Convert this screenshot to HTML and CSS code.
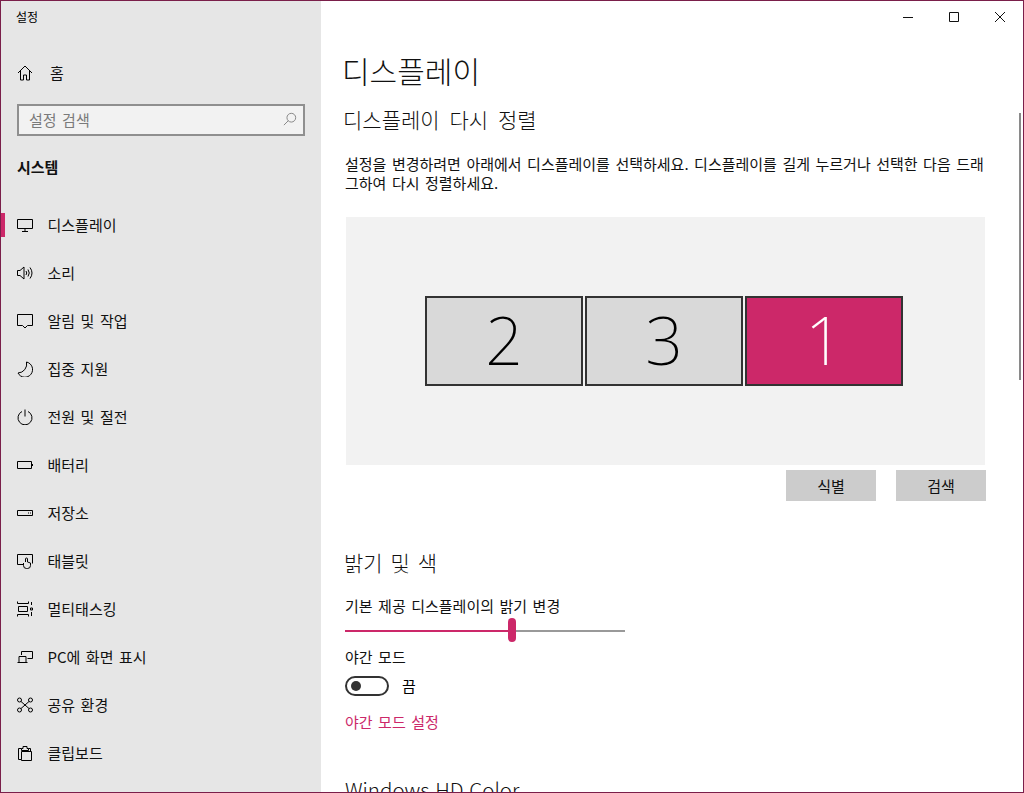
FILE: index.html
```html
<!DOCTYPE html>
<html lang="ko">
<head>
  <meta charset="UTF-8">
  <title>설정</title>
  <link rel="stylesheet" href="styles.css">
</head>
<body>
  <div class="window">

    <aside class="sidebar">
      <div class="app-title">설정</div>

      <div class="nav-row home-row">
        <svg class="icon" viewBox="0 0 16 16"><path d="M1 8 8 1l7 7M3.500 5.500V15h3v-5h3v5h3V5.500"/></svg>
        <span>홈</span>
      </div>

      <div class="search-box">
        <span class="search-text">설정 검색</span>
        <svg class="search-icon" viewBox="0 0 16 16"><circle cx="9.500" cy="6.500" r="5"/><path d="M6 10 1 15"/></svg>
      </div>

      <div class="group-title">시스템</div>

      <div class="nav-row active">
        <svg class="icon" viewBox="0 0 16 16"><path d="M.5 2.500h15v9H.5zM8 11.500v3M5 14.500h6"/></svg>
        <span>디스플레이</span>
      </div>
      <div class="nav-row">
        <svg class="icon" viewBox="0 0 16 16"><path d="M.5 5.500h2.500L7 2v12L3 10.500H.5zM9 6q1.500 2 0 4M11 4.500q2.500 3.500 0 7M13 2.500q4 5.500 0 11"/></svg>
        <span>소리</span>
      </div>
      <div class="nav-row">
        <svg class="icon" viewBox="0 0 16 16"><path d="M.5 1.500h15v11h-5L8 15l-2.500-2.500h-5z"/></svg>
        <span>알림 및 작업</span>
      </div>
      <div class="nav-row">
        <svg class="icon" viewBox="0 0 16 16"><path d="M9.500 1A7.700 7.700 0 1 1 1 12 9 9 0 0 0 9.500 1z"/></svg>
        <span>집중 지원</span>
      </div>
      <div class="nav-row">
        <svg class="icon" viewBox="0 0 16 16"><path d="M5 2.500a7 7 0 1 0 6 0M8 .5v7"/></svg>
        <span>전원 및 절전</span>
      </div>
      <div class="nav-row">
        <svg class="icon" viewBox="0 0 16 16"><path d="M.5 4.500h14v7H.5zM15.500 7v2"/></svg>
        <span>배터리</span>
      </div>
      <div class="nav-row">
        <svg class="icon" viewBox="0 0 16 16"><path d="M.5 5.500h15v5H.5zM11 8h1M13 8h1"/></svg>
        <span>저장소</span>
      </div>
      <div class="nav-row">
        <svg class="icon" viewBox="0 0 16 16"><path d="M6 11.500H.5v-10h15v9M8.500 9V6a1 1 0 0 1 2 0v3l3 1v2.500a3 3 0 0 1-3 3h-1a3 3 0 0 1-3-3V10"/></svg>
        <span>태블릿</span>
      </div>
      <div class="nav-row">
        <svg class="icon" viewBox="0 0 16 16"><path d="M.5.500v2h11v-2M.5 15.500v-2h11v2M1.500 5.500h9v5h-9zM14.500 1v3M14.500 11v4M13.500 7h2v2h-2z"/></svg>
        <span>멀티태스킹</span>
      </div>
      <div class="nav-row">
        <svg class="icon" viewBox="0 0 16 16"><path d="M4.500 6V2.500h11v7h-5M.5 13.500h10M2 13.500V7.500h7v6"/></svg>
        <span>PC에 화면 표시</span>
      </div>
      <div class="nav-row">
        <svg class="icon" viewBox="0 0 16 16"><circle cx="2.500" cy="3" r="2"/><circle cx="13.500" cy="3" r="2"/><circle cx="2.500" cy="13" r="2"/><circle cx="13.500" cy="13" r="2"/><path d="M4 4.500l8 7M12 4.500l-8 7"/></svg>
        <span>공유 환경</span>
      </div>
      <div class="nav-row">
        <svg class="icon" viewBox="0 0 16 16"><path d="M4.500 14.500h-3v-11h3M11.500 3.500h2v3M4.500 14.500v-8h10v9h-10zM4.500 3.500h1.500V1.500h4v2h1.500v2h-7z"/></svg>
        <span>클립보드</span>
      </div>
    </aside>

    <main class="content">
      <div class="title-bar">
        <svg class="win-btn" viewBox="0 0 10 10"><path d="M0 5.500h10"/></svg>
        <svg class="win-btn" viewBox="0 0 10 10"><path d="M.5.500h9v9h-9z"/></svg>
        <svg class="win-btn" viewBox="0 0 10 10"><path d="M0 0l10 10M10 0 0 10"/></svg>
      </div>

      <h1>디스플레이</h1>
      <h2 class="first-head">디스플레이 다시 정렬</h2>
      <p class="intro">설정을 변경하려면 아래에서 디스플레이를 선택하세요. 디스플레이를 길게 누르거나 선택한 다음 드래그하여 다시 정렬하세요.</p>

      <div class="arrange">
        <div class="monitor">2</div>
        <div class="monitor">3</div>
        <div class="monitor selected">1</div>
      </div>

      <div class="button-row">
        <button>식별</button>
        <button>검색</button>
      </div>

      <h2 class="bright-head">밝기 및 색</h2>
      <div class="field-label">기본 제공 디스플레이의 밝기 변경</div>
      <div class="slider">
        <div class="slider-fill"></div>
        <div class="slider-thumb"></div>
      </div>

      <div class="night-label">야간 모드</div>
      <div class="toggle-row">
        <div class="toggle"><div class="toggle-dot"></div></div>
        <span>끔</span>
      </div>
      <a class="link" href="#">야간 모드 설정</a>

      <h2 class="hd-head">Windows HD Color</h2>

      <div class="scrollbar"></div>
    </main>
  </div>
</body>
</html>
```
FILE: styles.css
```css
* {
  box-sizing: border-box;
}

html, body {
  margin: 0;
  height: 100%;
}

body {
  font-family: "Noto Sans CJK KR", "Noto Sans", sans-serif;
  font-size: 15px;
  word-spacing: 1.3px;
  color: #000;
  background: #fff;
}

.window {
  display: flex;
  height: 793px;
  border: 1px solid #7a1f4a;
  overflow: hidden;
}

.sidebar {
  width: 320px;
  flex-shrink: 0;
  background: #e6e6e6;
}

.app-title {
  font-size: 12px;
  line-height: 16px;
  padding: 8px 0 0 15px;
}

.nav-row {
  display: flex;
  align-items: center;
  height: 48px;
  padding-left: 16px;
  position: relative;
  line-height: 20px;
  color: #111;
}

.nav-row span {
  margin-left: 14.5px;
}

.home-row {
  margin-top: 24px;
}

.home-row span {
  margin-left: 17px;
}

.icon {
  width: 16px;
  height: 16px;
  flex-shrink: 0;
  fill: none;
  stroke: #000;
  stroke-width: 1;
}

.active::before {
  content: "";
  position: absolute;
  left: 0;
  top: 12px;
  width: 4px;
  height: 24px;
  background: #cc2869;
}

.search-box {
  display: flex;
  align-items: center;
  justify-content: space-between;
  width: 288px;
  height: 32px;
  margin: 7px 0 0 16px;
  padding: 0 6px 2px 10px;
  background: #f2f2f2;
  border: 2px solid #8f8f8f;
}

.search-text {
  color: #7a7a7a;
}

.search-icon {
  width: 14px;
  height: 14px;
  fill: none;
  stroke: #7a7a7a;
}

.group-title {
  font-weight: 700;
  line-height: 20px;
  padding: 21px 0 0 16px;
  margin-bottom: 24px;
  color: #111;
}

.content {
  flex: 1;
  position: relative;
  padding-left: 24px;
  overflow: hidden;
}

.title-bar {
  display: flex;
  justify-content: flex-end;
  height: 32px;
  margin-left: -24px;
}

.win-btn {
  width: 46px;
  height: 32px;
  padding: 11px 18px;
  fill: none;
  stroke: #111;
  stroke-width: 1;
}

h1 {
  margin: 17px 0 0 -3px;
  font-size: 30px;
  font-weight: 300;
  word-spacing: 0;
  line-height: 40px;
  color: #111;
}

h2 {
  margin: 0;
  font-size: 21px;
  font-weight: 300;
  word-spacing: 3px;
  line-height: 28px;
  color: #111;
}

.first-head {
  margin-top: 15px;
  margin-left: -2px;
  word-spacing: 4px;
}

.intro {
  margin: 21px 0 0;
  width: 644px;
  line-height: 19px;
  color: #111;
}

.arrange {
  display: flex;
  justify-content: center;
  align-items: center;
  gap: 2px;
  width: 639px;
  height: 248px;
  margin-top: 25px;
  margin-left: 1px;
  padding-right: 3px;
  background: #f2f2f2;
}

.monitor {
  display: flex;
  align-items: center;
  justify-content: center;
  width: 158px;
  height: 90px;
  padding-bottom: 4px;
  background: #d9d9d9;
  border: 2px solid #333;
  font-family: "Noto Sans", "Open Sans", sans-serif;
  font-size: 66px;
  font-weight: 200;
  color: #000;
}

.selected {
  background: #cc2869;
  color: #fff;
}

.button-row {
  display: flex;
  justify-content: flex-end;
  gap: 20px;
  width: 641px;
  margin-top: 5px;
}

button {
  width: 90px;
  height: 31px;
  padding: 0;
  border: none;
  background: #ccc;
  font: inherit;
  color: #111;
}

.bright-head {
  margin-top: 47px;
  margin-left: -1px;
  word-spacing: 2px;
}

.field-label {
  margin-top: 20px;
  line-height: 20px;
  color: #111;
}

.slider {
  position: relative;
  width: 280px;
  height: 2px;
  margin-top: 14px;
  background: #999;
}

.slider-fill {
  width: 167px;
  height: 2px;
  background: #cc2869;
}

.slider-thumb {
  position: absolute;
  left: 163px;
  top: -12px;
  width: 8px;
  height: 24px;
  border-radius: 4px;
  background: #cc2869;
}

.night-label {
  margin-top: 15px;
  line-height: 20px;
  color: #111;
}

.toggle-row {
  display: flex;
  align-items: center;
  gap: 13px;
  margin-top: 9px;
  line-height: 20px;
}

.toggle {
  display: flex;
  align-items: center;
  width: 44px;
  height: 20px;
  padding-left: 4px;
  border: 2px solid #333;
  border-radius: 10px;
}

.toggle-dot {
  width: 10px;
  height: 10px;
  border-radius: 50%;
  background: #333;
}

.link {
  display: block;
  margin-top: 16px;
  line-height: 20px;
  color: #cc2869;
  text-decoration: none;
}

.hd-head {
  margin-top: 43px;
  font-size: 20.5px;
  word-spacing: 0;
}

.scrollbar {
  position: absolute;
  top: 112px;
  right: 2px;
  width: 2px;
  height: 267px;
  background: #8a8a8a;
}
```
